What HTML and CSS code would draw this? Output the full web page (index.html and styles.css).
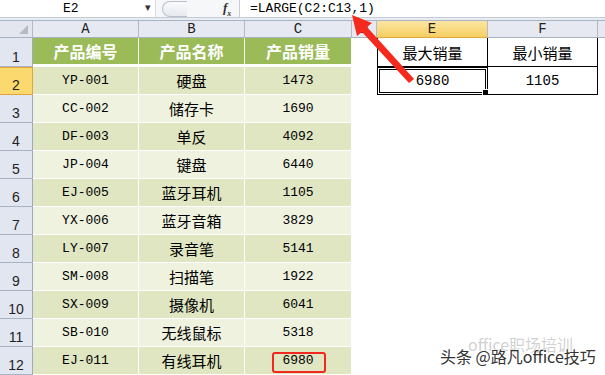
FILE: index.html
```html
<!DOCTYPE html>
<html>
<head>
  <title>LARGE - 产品销量</title>
  <link rel="stylesheet" href="styles.css">
</head>
<body>
  <!-- Formula bar -->
  <div class="formula-bar">
    <div class="name-box">
      <span class="name">E2</span>
      <span class="drop">&#9662;</span>
    </div>
    <div class="fx-area">
      <span class="pill"></span>
      <span class="fx">f<sub>x</sub></span>
    </div>
    <div class="formula">=LARGE(C2:C13,1)</div>
  </div>
  <div class="strip"></div>

  <!-- Sheet -->
  <div class="sheet head-rows">
    <div class="ch corner"><span class="tri"></span></div>
    <div class="ch">A</div>
    <div class="ch">B</div>
    <div class="ch">C</div>
    <div class="ch">D</div>
    <div class="ch sel">E</div>
    <div class="ch">F</div>
    <div class="ch rest"></div>

    <div class="rh">1</div>
    <div class="hd">产品编号</div>
    <div class="hd">产品名称</div>
    <div class="hd">产品销量</div>
    <div class="blank"></div>
    <div class="box top left">最大销量</div>
    <div class="box top">最小销量</div>
    <div class="blank"></div>

    <div class="rh sel">2</div>
    <div class="c dark code">YP-001</div>
    <div class="c dark">硬盘</div>
    <div class="c dark num">1473</div>
    <div class="blank"></div>
    <div class="box left active num">6980<span class="handle"></span></div>
    <div class="box num">1105</div>
    <div class="blank"></div>
  </div>
  <div class="sheet" id="rows"></div>

  <!-- Overlay: arrow -->
  <svg class="arrow" width="605" height="375" viewBox="0 0 605 375">
    <path d="M414 79 L409 83 L362 32 L357 36 L352 15 L372 23 L367 27 Z" fill="#f5291c"/>
  </svg>

  <!-- Red box on C12 -->
  <div class="mark"></div>

  <div class="watermark">
    <span class="faint">office职场培训</span>
    <span class="main">头条 @路凡office技巧</span>
  </div>

  <script>
    // rows 3 to 12
    const data = [
      ["CC-002", "储存卡", 1690],
      ["DF-003", "单反", 4092],
      ["JP-004", "键盘", 6440],
      ["EJ-005", "蓝牙耳机", 1105],
      ["YX-006", "蓝牙音箱", 3829],
      ["LY-007", "录音笔", 5141],
      ["SM-008", "扫描笔", 1922],
      ["SX-009", "摄像机", 6041],
      ["SB-010", "无线鼠标", 5318],
      ["EJ-011", "有线耳机", 6980]
    ];

    const rows = document.getElementById("rows");
    let html = "";
    data.forEach(function (d, i) {
      const band = i % 2 === 0 ? "light" : "dark";
      html += '<div class="rh">' + (i + 3) + '</div>';
      html += '<div class="c ' + band + ' code">' + d[0] + '</div>';
      html += '<div class="c ' + band + '">' + d[1] + '</div>';
      html += '<div class="c ' + band + ' num">' + d[2] + '</div>';
      html += '<div class="blank"></div><div class="blank"></div><div class="blank"></div><div class="blank"></div>';
    });
    rows.innerHTML = html;
  </script>
</body>
</html>
```

FILE: styles.css
```css
/* Excel-like sheet */
body {
  margin: 0;
  width: 605px;
  height: 375px;
  overflow: hidden;
  position: relative;
  background: #fff;
  font-family: "Liberation Sans", "Noto Sans CJK SC", sans-serif;
  color: #000;
}

.formula-bar {
  display: flex;
  height: 17px;
  border-bottom: 1px solid #c5ccd6;
  background: #fff;
}
.name-box {
  width: 155px;
  display: flex;
  align-items: center;
  position: relative;
  border-right: 1px solid #d8dde5;
}
.name {
  font-family: "Liberation Mono", monospace;
  font-size: 13px;
  margin-left: 63px;
}
.drop {
  position: absolute;
  left: 145px;
  top: 1px;
  font-size: 11px;
  color: #333;
}
.fx-area {
  width: 83px;
  display: flex;
  align-items: center;
  background: #f6f7f9;
  border-right: 1px solid #c8ced8;
}
.pill {
  width: 24px;
  height: 14px;
  margin-left: 6px;
  border: 1px solid #b9c0cb;
  border-right: none;
  border-radius: 8px 0 0 8px;
  background: linear-gradient(#fafbfc, #e6e9ee);
}
.fx {
  margin-left: 36px;
  font-family: "Liberation Serif", serif;
  font-style: italic;
  font-weight: bold;
  font-size: 13px;
  color: #333;
}
.fx sub {
  font-size: 8px;
}
.formula {
  padding-left: 10px;
  font-family: "Liberation Mono", monospace;
  font-size: 13px;
  line-height: 17px;
}
.strip {
  height: 2px;
  border-bottom: 1px solid #a9b3c1;
  background: #e9ecf1;
}

.sheet {
  display: grid;
  grid-template-columns: 33px 106px 106px 107px 25px 111px 110px 7px;
  grid-auto-rows: 28px;
}
.sheet.head-rows {
  grid-template-rows: 17px 29px 28px;
}

.ch {
  background: #e6e9f1;
  border-right: 1px solid #b3bac6;
  border-bottom: 1px solid #a9b1bd;
  box-sizing: border-box;
  font-family: "Liberation Mono", monospace;
  font-size: 14px;
  text-align: center;
  line-height: 16px;
  color: #222;
}
.ch.sel {
  background: linear-gradient(#fbe6a3, #f7cf62);
  border-bottom-color: #e0a93d;
}
.ch.rest {
  border-right: none;
}
.corner {
  position: relative;
  background: #e3e6ee;
}
.tri {
  position: absolute;
  right: 4px;
  bottom: 3px;
  width: 0;
  height: 0;
  border-left: 9px solid transparent;
  border-bottom: 9px solid #b5bac3;
}

.rh {
  background: #e2e6f1;
  border-right: 1px solid #9ea9bb;
  border-bottom: 1px solid #aab3c3;
  box-sizing: border-box;
  display: flex;
  align-items: flex-end;
  justify-content: center;
  padding-bottom: 1px;
  font-size: 14px;
  color: #222;
}
.rh.sel {
  background: #fcd96f;
  border: 1px solid #e2a53c;
  border-left: none;
}

.hd,
.c {
  display: flex;
  align-items: center;
  justify-content: center;
  box-sizing: border-box;
  border-right: 1px solid #fff;
  border-bottom: 1px solid #fff;
  font-size: 15px;
  font-family: "Noto Sans CJK SC", sans-serif;
}
.hd {
  background: #9bbb59;
  color: #fff;
  font-weight: bold;
  font-size: 16px;
  border-bottom: 3px solid #fff;
}
.dark {
  background: #dfe6c1;
}
.light {
  background: #eef2df;
}
.code,
.num {
  font-family: "Liberation Mono", monospace;
  font-size: 13px;
}

.blank {
  background: #fff;
}
.box {
  display: flex;
  align-items: center;
  justify-content: center;
  box-sizing: border-box;
  border-right: 1px solid #000;
  border-bottom: 1px solid #000;
  font-family: "Noto Sans CJK SC", sans-serif;
  font-size: 15px;
  background: #fff;
  position: relative;
}
.box.left {
  border-left: 1px solid #000;
}
.box.num {
  font-family: "Liberation Mono", monospace;
  font-size: 14px;
}
.box.active {
  border: 3px double #000;
}
.handle {
  position: absolute;
  right: -4px;
  bottom: -4px;
  width: 5px;
  height: 5px;
  background: #000;
  border: 1px solid #fff;
}

.arrow {
  position: absolute;
  left: 0;
  top: 0;
  pointer-events: none;
}

.mark {
  position: absolute;
  left: 272px;
  top: 352px;
  width: 50px;
  height: 17px;
  border: 2px solid #f0281e;
  border-radius: 3px;
}

.watermark {
  position: absolute;
  left: 440px;
  top: 330px;
  width: 165px;
  height: 40px;
}
.faint {
  position: absolute;
  left: 28px;
  top: 2px;
  font-family: "Noto Sans CJK SC", sans-serif;
  font-size: 16px;
  color: rgba(150, 150, 150, 0.45);
}
.main {
  position: absolute;
  left: 0;
  top: 14px;
  font-family: "Noto Sans CJK SC", sans-serif;
  font-size: 16px;
  color: #333;
  text-shadow: 0 0 2px #fff, 0 0 2px #fff;
  white-space: nowrap;
}
```
